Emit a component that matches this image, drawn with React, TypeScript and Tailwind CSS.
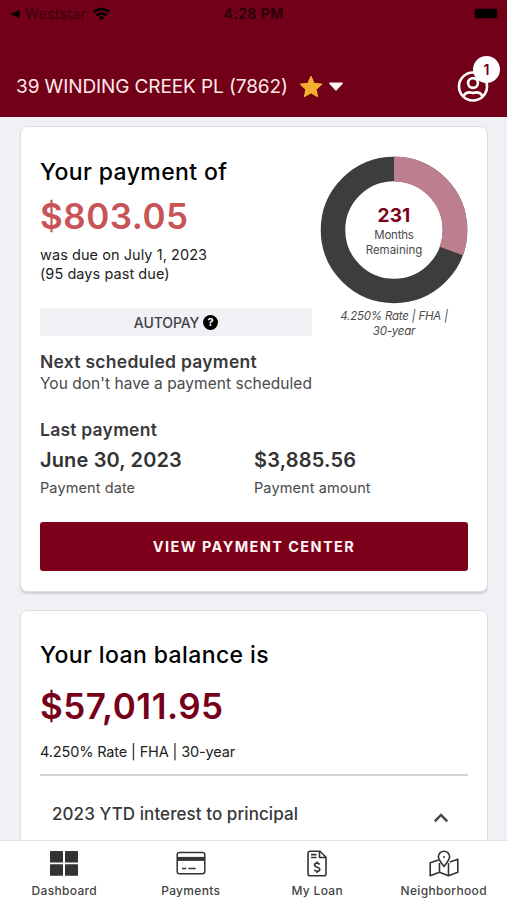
import type { ReactNode } from "react";

function StatusBar() {
  return (
    <div className="grid h-[28px] grid-cols-3 items-center pr-[10px] pl-[10px] text-[14px] leading-[28px] text-[#25000a]">
      <div className="flex items-center">
        <svg width="10" height="10" viewBox="0 0 10 10" className="text-black">
          <path d="M9.6 .9v8.2L.4 5z" fill="currentColor" />
        </svg>
        <span className="ml-[5px] tracking-[0.35px] text-[#3a000c]">Weststar</span>
        <svg width="19" height="14" viewBox="0 0 19 14" className="ml-[6px] text-black" fill="none" stroke="currentColor">
          <path d="M1.6 5.3a11.4 11.4 0 0 1 15.8 0" strokeWidth="2.5" />
          <path d="M4.5 8.5a7.2 7.2 0 0 1 10 0" strokeWidth="2.4" />
          <path d="M9.5 13.4 6.8 10.6a3.9 3.9 0 0 1 5.4 0z" fill="currentColor" stroke="none" />
        </svg>
      </div>
      <div className="text-center font-semibold tracking-[0.45px] whitespace-nowrap">4:28 PM</div>
      <div className="flex justify-end">
        <div className="mt-[-1px] h-[9px] w-[22px] rounded-[2px] bg-black shadow-[0_0_2px_#000]" />
      </div>
    </div>
  );
}

function Header() {
  return (
    <header className="h-[117px] shrink-0 bg-[#720018]">
      <StatusBar />
      <div className="flex h-[89px] items-center pt-[29px] pr-[18px] pl-[16px]">
        <span className="text-[19px] leading-[24px] tracking-[-0.1px] whitespace-nowrap text-[#ffe9e9]">
          39 WINDING CREEK PL (7862)
        </span>
        <svg width="24" height="24" viewBox="0 0 24 24" className="ml-[11px]">
          <path
            d="M12 1.6l3.1 6.8 7.4.8-5.5 5 1.5 7.3-6.5-3.7-6.5 3.7L7 14.2l-5.500-5 7.400-.8z"
            fill="#f2b02f"
            stroke="#f2b02f"
            strokeWidth="1.2"
            strokeLinejoin="round"
          />
        </svg>
        <svg width="16" height="10" viewBox="0 0 16 10" className="ml-[5px]">
          <path d="M1.800 1.200h12.400L8 8z" fill="#fff4f2" stroke="#fff4f2" strokeWidth="1.4" strokeLinejoin="round" />
        </svg>
        <div className="relative ml-auto h-[32px] w-[32px]">
          <svg width="32" height="32" viewBox="0 0 32 32" fill="none" stroke="#fff" strokeWidth="2.6">
            <circle cx="16" cy="15.5" r="14" />
            <circle cx="16" cy="12" r="4.900" />
            <path d="M6.400 25.700c1-3 4-4.300 6.600-4.300 1.200 0 1.800.5 3 .5s1.800-.5 3-.5c2.600 0 5.600 1.300 6.600 4.300" />
          </svg>
          <div className="absolute -top-[15px] left-[16px] flex h-[27px] w-[27px] items-center justify-center rounded-full bg-white text-[14px] font-semibold text-[#720018]">
            1
          </div>
        </div>
      </div>
    </header>
  );
}

function Card({ children, className }: { children: ReactNode; className: string }) {
  return (
    <section
      className={`rounded-[7px] border border-[#dedee1] bg-white px-[19px] shadow-[0_2px_1px_#d2d2d5] ${className}`}
    >
      {children}
    </section>
  );
}

function Donut() {
  return (
    <div className="relative h-[148px] w-[148px]">
      <svg width="148" height="148" viewBox="0 0 148 148">
        <circle cx="74" cy="74" r="61" fill="none" stroke="#3d3d3d" strokeWidth="24.5" />
        <path d="M74 13A61 61 0 0 1 131.250 95.060" fill="none" stroke="#bc7f8d" strokeWidth="24.8" />
      </svg>
      <div className="absolute inset-0 flex flex-col items-center pt-[47px] text-[11.5px] leading-[15px] text-[#4a4a4a]">
        <span className="text-[19px] leading-[25px] font-bold tracking-[0.2px] text-[#7b0019]">231</span>
        <span className="tracking-[-0.2px]">Months</span>
        <span>Remaining</span>
      </div>
    </div>
  );
}

function PaymentCard() {
  return (
    <Card className="h-[466px] shrink-0">
      <div className="flex justify-between">
        <div className="w-[272px] pt-[29px]">
          <h2 className="text-[23px] leading-[32px] font-medium tracking-[0.4px] text-black">Your payment of</h2>
          <p className="mt-[8px] text-[35px] leading-[40px] font-semibold tracking-[0.5px] text-[#c95457]">$803.05</p>
          <p className="mt-[9px] text-[14.5px] leading-[19px] tracking-[0.06px] text-[#222]">
            was due on July 1, 2023
            <br />
            (95 days past due)
          </p>
          <div className="mt-[25px] flex h-[28px] items-center justify-center gap-[4px] rounded-[2px] bg-[#f1f0f5] text-[14px] font-medium text-[#3f3f42]">
            <span className="tracking-[-0.1px]">AUTOPAY</span>
            <span className="flex h-[15px] w-[15px] items-center justify-center rounded-full bg-black text-[11px] leading-none font-bold text-white">
              ?
            </span>
          </div>
        </div>
        <div className="-ml-[1px] flex w-[148px] flex-col pt-[29px]">
          <Donut />
          <p className="mt-[5px] text-center text-[11.5px] leading-[15px] tracking-[-0.2px] text-[#4a4a4a] italic">
            4.250% Rate | FHA |
            <br />
            30-year
          </p>
        </div>
      </div>
      <h3 className="mt-[11px] text-[17.5px] leading-[24px] font-semibold tracking-[0.27px] text-[#3a3a3c]">
        Next scheduled payment
      </h3>
      <p className="text-[15.5px] leading-[20px] tracking-[0.03px] text-[#4a4a4a]">You don't have a payment scheduled</p>
      <h3 className="mt-[24px] text-[17.5px] leading-[24px] font-semibold tracking-[0.23px] text-[#3a3a3c]">
        Last payment
      </h3>
      <div className="mt-[5px] grid grid-cols-2 text-[#333]">
        <div>
          <p className="text-[20px] leading-[26px] font-semibold tracking-[0.14px]">June 30, 2023</p>
          <p className="mt-[5px] text-[14.5px] leading-[20px] tracking-[0.1px] text-[#4a4a4a]">Payment date</p>
        </div>
        <div>
          <p className="text-[20px] leading-[26px] font-semibold tracking-[0.2px]">$3,885.56</p>
          <p className="mt-[5px] text-[14.5px] leading-[20px] tracking-[0.1px] text-[#4a4a4a]">Payment amount</p>
        </div>
      </div>
      <button className="mt-[24px] block h-[49px] w-full rounded-[3px] bg-[#7c0019] text-[14.5px] font-bold tracking-[1.4px] text-[#fff4f4]">
        VIEW PAYMENT CENTER
      </button>
    </Card>
  );
}

function BalanceCard() {
  return (
    <Card className="mt-[18px] h-[260px] shrink-0">
      <h2 className="mt-[28px] text-[23px] leading-[32px] font-medium tracking-[0.4px] text-black">
        Your loan balance is
      </h2>
      <p className="mt-[15px] text-[35px] leading-[40px] font-semibold tracking-[0.5px] text-[#76001a]">$57,011.95</p>
      <p className="mt-[16px] text-[14.5px] leading-[20px] tracking-[-0.14px] text-[#222]">
        4.250% Rate | FHA | 30-year
      </p>
      <div className="mt-[12px] flex h-[78px] items-center justify-between border-t-2 border-[#d3d3d3] pr-[19px] pl-[12px]">
        <span className="text-[17px] leading-[24px] font-medium tracking-[0.07px] text-[#38383a]">
          2023 YTD interest to principal
        </span>
        <svg width="16" height="10" viewBox="0 0 16 10" className="mt-[7px]">
          <path d="M1.800 8.400 8 2l6.200 6.400" fill="none" stroke="#444" strokeWidth="2.5" />
        </svg>
      </div>
    </Card>
  );
}

function DashboardIcon() {
  return (
    <svg width="30" height="28" viewBox="0 0 30 28" fill="#333">
      <rect x="1" y="1" width="13" height="11.500" rx=".6" />
      <rect x="16" y="1" width="13" height="11.500" rx=".6" />
      <rect x="1" y="14.300" width="13" height="11.500" rx=".6" />
      <rect x="16" y="14.300" width="13" height="11.500" rx=".6" />
    </svg>
  );
}

function CardIcon() {
  return (
    <svg width="30" height="28" viewBox="0 0 30 28" fill="none" stroke="#333" strokeWidth="1.500">
      <rect x="1.200" y="2.500" width="27.600" height="21.300" rx="2.200" />
      <path d="M1.200 8.900h27.600" strokeWidth="4" />
      <path d="M6 18.500h4.200M12.400 18.500h7.200" />
    </svg>
  );
}

function LoanIcon() {
  return (
    <svg width="30" height="28" viewBox="0 0 30 28" fill="none" stroke="#333" strokeWidth="1.600" strokeLinejoin="round">
      <path d="M18 1.300H8A2 2 0 0 0 6 3.300V23.700a2 2 0 0 0 2 2H22a2 2 0 0 0 2-2V7.300z" />
      <path d="M17.500 1.300V7.500H24" />
      <path d="M9 4.600h5.500M9 7.500h5.500" />
      <path d="M17.600 14.600c-.4-1-1.300-1.500-2.500-1.500-1.500 0-2.500.8-2.500 2 0 2.800 5.200 1.400 5.200 4.200 0 1.200-1.100 2-2.700 2-1.400 0-2.400-.6-2.700-1.700M15.100 11.500v1.600M15.100 21.300v1.600" />
    </svg>
  );
}

function MapIcon() {
  return (
    <svg width="30" height="28" viewBox="0 0 30 28" fill="none" stroke="#333" strokeWidth="1.600" strokeLinejoin="round">
      <path d="M9.600 9.900 1.200 12.700V25.700l9.300-3.500 9 3.500 9.300-3.500V9.300l-8 2.700" />
      <path d="M10.500 13v9.200M19.500 13v12.700" />
      <path d="M15 16.500C12 12.500 9.400 9.600 9.400 6.800a5.600 5.600 0 0 1 11.200 0c0 2.800-2.600 5.700-5.600 9.700z" />
      <circle cx="15" cy="7" r="1" fill="#333" stroke="none" />
    </svg>
  );
}

function Tab({ icon, label }: { icon: ReactNode; label: string }) {
  return (
    <div className="flex flex-col items-center pt-[9px]">
      {icon}
      <span className="mt-[5px] text-[12px] leading-[16px] font-medium tracking-[0.32px] text-[#444]">{label}</span>
    </div>
  );
}

export default function App() {
  return (
    <div className="flex h-[900px] w-[507px] flex-col overflow-hidden bg-[#f1f0f5] font-['Inter',sans-serif]">
      <Header />
      <main className="flex h-[723px] flex-col overflow-hidden pt-[9px] pr-[19px] pl-[20px]">
        <PaymentCard />
        <BalanceCard />
      </main>
      <nav className="grid h-[60px] shrink-0 grid-cols-4 border-t border-[#e2e2e4] bg-white pl-[1px]">
        <Tab icon={<DashboardIcon />} label="Dashboard" />
        <Tab icon={<CardIcon />} label="Payments" />
        <Tab icon={<LoanIcon />} label="My Loan" />
        <Tab icon={<MapIcon />} label="Neighborhood" />
      </nav>
    </div>
  );
}
